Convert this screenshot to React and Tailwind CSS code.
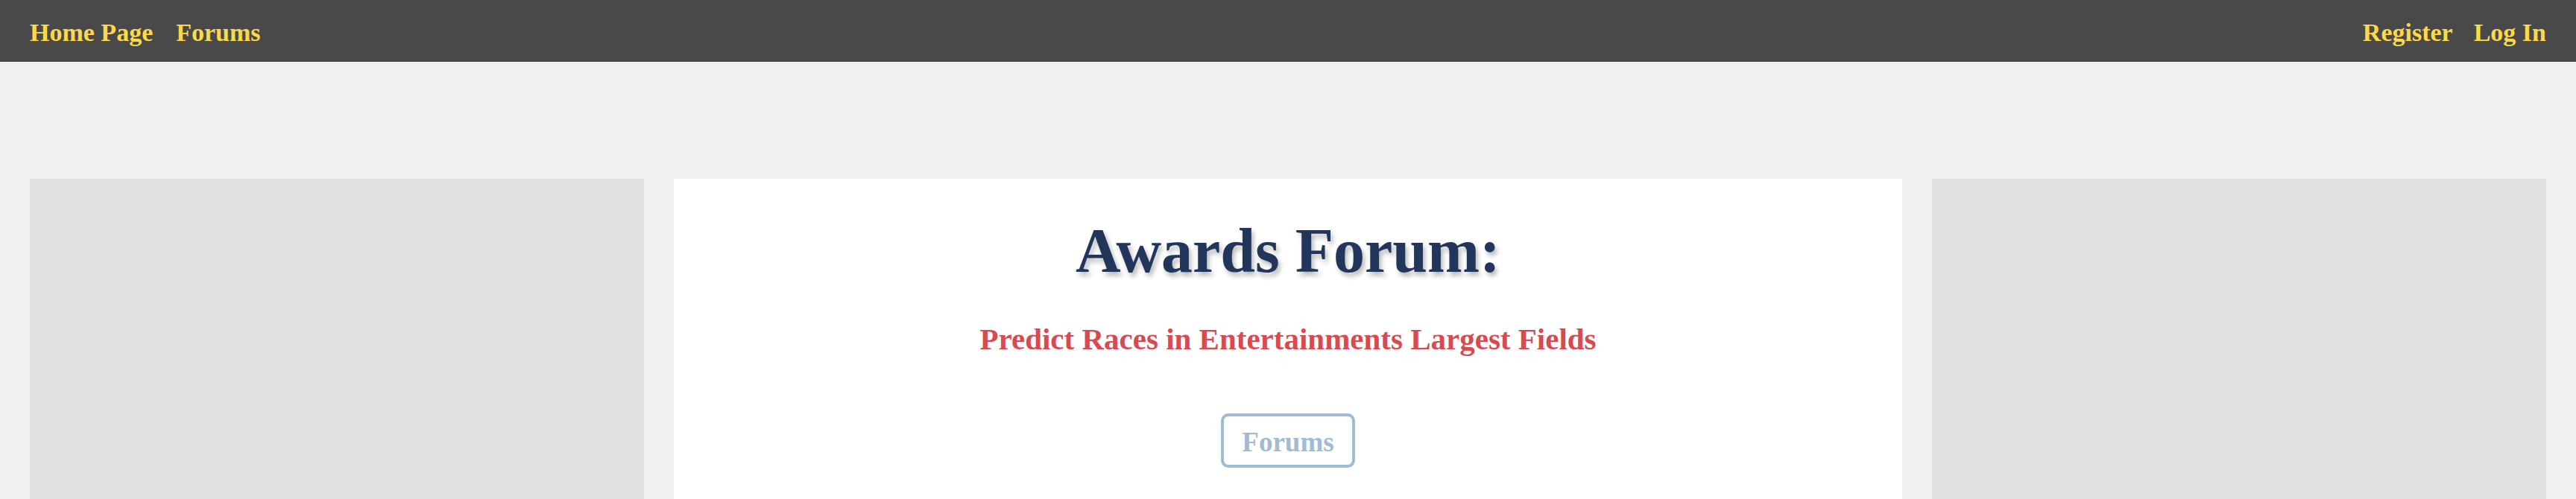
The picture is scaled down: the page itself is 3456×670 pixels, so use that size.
const navLinks = ["Home Page", "Forums"];
const authLinks = ["Register", "Log In"];

const Navbar = () => {
  return (
    <nav className="h-[83px] bg-[#494949] px-10 pt-[4px] flex justify-between items-center">
      <div className="flex gap-[31px]">
        {navLinks.map((link) => (
          <a key={link} href="#" className="text-[34px] leading-none font-bold text-[#fad94a]">
            {link}
          </a>
        ))}
      </div>
      <div className="flex gap-[28px]">
        {authLinks.map((link) => (
          <a key={link} href="#" className="text-[34px] leading-none font-bold text-[#fad94a]">
            {link}
          </a>
        ))}
      </div>
    </nav>
  );
};

const App = () => {
  return (
    <div className="min-h-screen bg-[#f0f0f0] font-['Liberation_Serif',_'Times_New_Roman',_serif]">
      <Navbar />

      <main className="grid grid-cols-[1fr_2fr_1fr] gap-10 px-10 pt-[157px]">
        {/* ad space izquierda */}
        <aside className="bg-[#e0e0e0] min-h-[600px]"></aside>

        <section className="bg-white min-h-[600px] flex flex-col items-center pt-[55px]">
          <h1 className="text-[84px] leading-none font-bold text-[#22355a] [text-shadow:3px_5px_6px_rgba(0,0,0,0.28)]">
            Awards Forum:
          </h1>
          <h2 className="mt-[56px] text-[41px] leading-none font-bold text-[#d94a50]">
            Predict Races in Entertainments Largest Fields
          </h2>
          <button className="mt-[79px] border-4 border-[#a0bbd3] rounded-[10px] px-6 pt-[16px] pb-[12px] text-[37px] leading-none font-bold text-[#a0bbd3] bg-white">
            Forums
          </button>
        </section>

        {/* ad space derecha */}
        <aside className="bg-[#e0e0e0] min-h-[600px]"></aside>
      </main>
    </div>
  );
};

export default App;
